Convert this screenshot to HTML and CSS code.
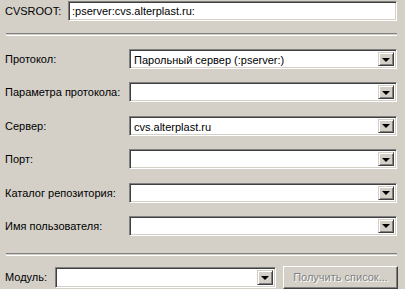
FILE: index.html
```html
<!DOCTYPE html>
<html lang="ru">
<head>
  <meta charset="UTF-8">
  <title>CVSROOT</title>
  <link rel="stylesheet" href="styles.css">
</head>
<body>
  <div class="dialog">
    <div class="root-row">
      <label class="root-label">CVSROOT:</label>
      <div class="edit root-edit">:pserver:cvs.alterplast.ru:</div>
    </div>

    <div class="etched"></div>

    <div class="fields">
      <div class="field">
        <label>Протокол:</label>
        <div class="combo"><span class="value">Парольный сервер (:pserver:)</span><span class="drop"></span></div>
      </div>
      <div class="field">
        <label>Параметра протокола:</label>
        <div class="combo"><span class="value"></span><span class="drop"></span></div>
      </div>
      <div class="field">
        <label>Сервер:</label>
        <div class="combo"><span class="value">cvs.alterplast.ru</span><span class="drop"></span></div>
      </div>
      <div class="field">
        <label>Порт:</label>
        <div class="combo"><span class="value"></span><span class="drop"></span></div>
      </div>
      <div class="field">
        <label>Каталог репозитория:</label>
        <div class="combo"><span class="value"></span><span class="drop"></span></div>
      </div>
      <div class="field">
        <label>Имя пользователя:</label>
        <div class="combo"><span class="value"></span><span class="drop"></span></div>
      </div>
    </div>

    <div class="etched etched-bottom"></div>

    <div class="module-row">
      <label class="module-label">Модуль:</label>
      <div class="combo module-combo"><span class="value"></span><span class="drop"></span></div>
      <button class="btn" disabled>Получить список...</button>
    </div>
  </div>
</body>
</html>
```

FILE: styles.css
```css
html, body {
  margin: 0;
  padding: 0;
  background-color: #d4d0c8;
}

body {
  font-family: "Liberation Sans", Arial, sans-serif;
  font-size: 11px;
  color: #000;
}

.dialog {
  width: 405px;
  height: 289px;
  padding: 1px 0 0 5px;
  box-sizing: border-box;
}

.root-row {
  display: flex;
  align-items: center;
  height: 20px;
}

.root-label {
  width: 63px;
}

.edit,
.combo {
  background-color: #fff;
  border: 1px solid;
  border-color: #808080 #fff #fff #808080;
  box-shadow: inset 1px 1px #404040, inset -1px -1px #d4d0c8;
  box-sizing: border-box;
}

.root-edit {
  width: 329px;
  height: 20px;
  line-height: 18px;
  padding-left: 3px;
}

.etched {
  height: 1px;
  margin: 12px 8px 0 1px;
  border-top: 1px solid #808080;
  border-bottom: 1px solid #fff;
}

.fields {
  display: flex;
  flex-direction: column;
  gap: 13.4px;
  margin-top: 13px;
}

.field {
  display: flex;
  align-items: center;
  height: 20px;
}

.field label {
  width: 124px;
}

.combo {
  display: flex;
  align-items: stretch;
  height: 20px;
  padding: 2px;
}

.field .combo {
  width: 268px;
}

.value {
  flex: 1;
  line-height: 16px;
  padding-left: 2px;
  white-space: nowrap;
  overflow: hidden;
}

.drop {
  width: 16px;
  background-color: #d4d0c8;
  border: 1px solid;
  border-color: #d4d0c8 #404040 #404040 #d4d0c8;
  box-shadow: inset 1px 1px #fff, inset -1px -1px #808080;
  box-sizing: border-box;
  display: flex;
  align-items: center;
  justify-content: center;
}

.drop::after {
  content: "";
  border-left: 4px solid transparent;
  border-right: 4px solid transparent;
  border-top: 4px solid #000;
  margin-top: 1px;
}

.etched-bottom {
  margin-top: 17px;
}

.module-row {
  display: flex;
  align-items: center;
  margin-top: 10px;
  height: 23px;
}

.module-label {
  width: 50px;
}

.module-combo {
  width: 221px;
  height: 21px;
}

.btn {
  margin-left: 7px;
  width: 115px;
  height: 23px;
  padding: 0;
  font-family: "Liberation Sans", Arial, sans-serif;
  font-size: 11px;
  color: #808080;
  text-shadow: 1px 1px #fff;
  background-color: #d4d0c8;
  border: 1px solid;
  border-color: #fff #404040 #404040 #fff;
  box-shadow: inset -1px -1px #808080;
}
```
